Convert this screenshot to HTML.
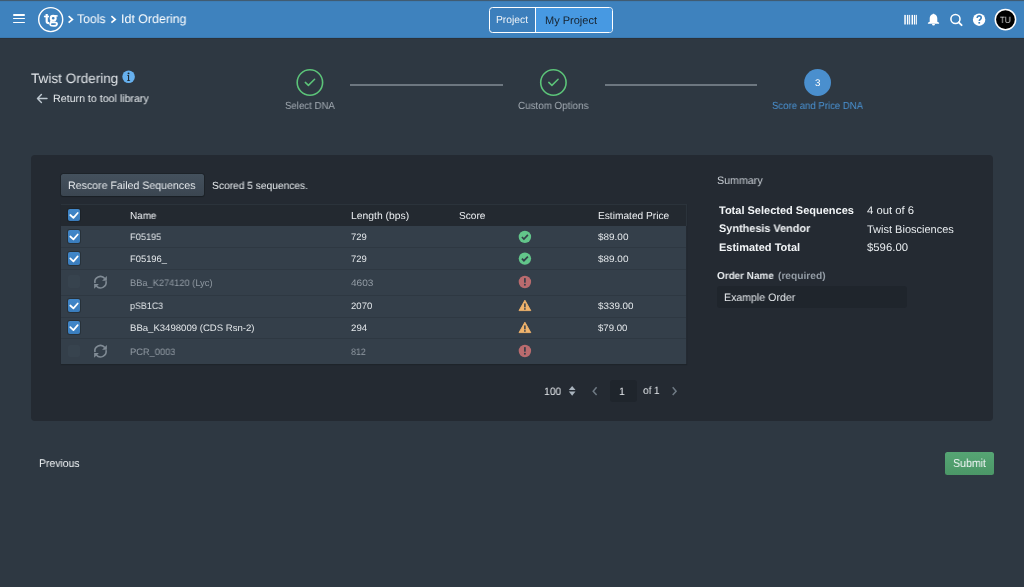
<!DOCTYPE html>
<html><head><meta charset="utf-8">
<style>
*{box-sizing:border-box;margin:0;padding:0}
html,body{width:1024px;height:587px;overflow:hidden;background:#2e3842;font-family:"Liberation Sans",sans-serif;color:#f5f8fa;text-rendering:geometricPrecision}
.a{position:absolute;white-space:pre;line-height:1;transform-origin:0 0;will-change:transform}
.b{position:absolute}
svg{position:absolute;display:block;overflow:visible}
.row{position:absolute;left:61px;width:625px;background:#343f4a;box-shadow:inset 0 1px 0 #2e3842}
.cb{position:absolute;left:68px;width:12.3px;height:12.5px;border-radius:2px;background:linear-gradient(#4187c9,#3a7dbd);box-shadow:0 0 0 1px rgba(16,22,26,.35)}
.cbd{position:absolute;left:68px;width:12.3px;height:12.5px;border-radius:2px;background:#37434e}
</style></head><body>
<!-- navbar -->
<div class="b" style="left:0;top:0;width:1024px;height:38px;background:#3e82be"></div>
<div class="b" style="left:0;top:0;width:1024px;height:1px;background:#405b72"></div>
<div class="b" style="left:0;top:1px;width:1024px;height:1px;background:#3d7db5"></div>
<div class="b" style="left:0;top:37px;width:1024px;height:1px;background:#3a7ab2"></div>
<div class="b" style="left:0;top:38px;width:1024px;height:1px;background:#2a323b"></div>
<!-- hamburger -->
<div class="b" style="left:12.9px;top:14.1px;width:12.3px;height:1.65px;background:#fff;border-radius:1px"></div>
<div class="b" style="left:12.9px;top:17.75px;width:12.3px;height:1.7px;background:#fff;border-radius:1px"></div>
<div class="b" style="left:12.9px;top:21.5px;width:12.3px;height:1.7px;background:#fff;border-radius:1px"></div>
<!-- logo -->
<svg style="left:0;top:0" width="1" height="1"><circle cx="50.7" cy="19.6" r="12" fill="none" stroke="#fff" stroke-width="1.4"/></svg>
<svg style="left:0;top:0" width="1" height="1"><g fill="none" stroke="#fff">
<path d="M46.7 13.9V21.5Q46.7 23.3 49.3 23.1" stroke-width="2.2"/>
<path d="M43.9 16.5H49" stroke-width="1.6"/>
<ellipse cx="53.2" cy="18.25" rx="2.45" ry="2.35" stroke-width="2.1"/>
<path d="M54.8 15.9H57.6" stroke-width="1.6"/>
<path d="M51.6 20.6Q50.3 21.6 51.3 22.3H54.6Q57.2 22.5 57.1 24.1Q56.9 25.9 53.6 25.9Q50.2 25.9 50.1 24.2Q50.1 23.2 51.3 22.6" stroke-width="1.7"/>
</g></svg>
<!-- breadcrumb chevrons -->
<svg style="left:0;top:0" width="1" height="1"><path d="M68.6 16.2 L72.4 19.4 L68.6 22.6" fill="none" stroke="#fff" stroke-width="1.7"/><path d="M111.4 16.2 L115.2 19.4 L111.4 22.6" fill="none" stroke="#fff" stroke-width="1.7"/></svg>
<!-- project switch -->
<div class="b" style="left:489px;top:7px;width:123.6px;height:25.5px;border:1.6px solid #fff;border-radius:3.5px;overflow:hidden;background:#3c7fbc">
  <div class="b" style="left:44.5px;top:0;width:1.6px;height:100%;background:#fff"></div>
  <div class="b" style="left:46px;top:0;right:0;height:100%;background:#4799e2"></div>
</div>
<!-- right icons -->
<svg style="left:0;top:0" width="1" height="1"><g fill="#fff">
<rect x="904.3" y="14.9" width="1.5" height="9.6"/><rect x="906.9" y="14.9" width="1.3" height="9.6"/><rect x="908.8" y="14.9" width="1.3" height="9.6" fill-opacity=".85"/><rect x="910.9" y="14.9" width="0.7" height="9.6" fill-opacity=".5"/><rect x="911.8" y="14.9" width="1.3" height="9.6"/><rect x="914" y="14.9" width="1.3" height="9.6"/><rect x="916" y="14.9" width="1" height="9.6" fill-opacity=".85"/>
</g>
<path fill="#fff" d="M933.5 13.6c-0.5 0-0.8 0.4-0.9 0.7c-1.8 0.5-2.9 2.1-2.9 4.1v3.4l-1.8 1.0v0.9h11.2v-0.9l-1.8-1.0v-3.4c0-2-1.1-3.6-2.9-4.1c-0.1-0.3-0.4-0.7-0.9-0.7z"/>
<path fill="#fff" d="M932 23.9h3a1.5 1.6 0 0 1-3 0z"/>
<circle cx="955.45" cy="19.05" r="4.55" fill="none" stroke="#fff" stroke-width="1.55"/>
<path d="M958.7 22.3 L961.6 25.2" stroke="#fff" stroke-width="1.9" stroke-linecap="round"/>
<circle cx="979.1" cy="19.7" r="6.2" fill="#fff"/>
<path d="M977.2 18.1c0-1.5 0.9-2.2 2-2.2c1.2 0 2 0.8 2 1.8c0 1.6-1.9 1.7-1.9 3.3" fill="none" stroke="#3e82be" stroke-width="1.6"/>
<rect x="978.4" y="22" width="1.7" height="1.6" fill="#3e82be"/>
<circle cx="1005.45" cy="19.55" r="10.15" fill="#000" stroke="#fff" stroke-width="1.5"/>
</svg>

<!-- title icons -->
<svg style="left:0;top:0" width="1" height="1">
<circle cx="128.6" cy="76.8" r="6.3" fill="#66b0ee"/>
<circle cx="128.55" cy="73.4" r="0.95" fill="#1f2a33"/>
<path d="M127.2 75h1.9v5.3h1v0.8h-3v-0.8h0.9v-4.5h-0.8z" fill="#1f2a33"/>
<path d="M47 98.5H37.6M41.4 94.6L37.5 98.5l3.9 3.9" fill="none" stroke="#bdc7d0" stroke-width="1.45" stroke-linecap="round" stroke-linejoin="round"/>
</svg>

<!-- steps -->
<svg style="left:0;top:0" width="1" height="1">
<circle cx="309.9" cy="82.5" r="12.7" fill="none" stroke="#5cc479" stroke-width="1.6"/>
<path d="M305.3 82.4 L308.4 85.4 L314.6 79.3" fill="none" stroke="#5cc479" stroke-width="1.5" stroke-linecap="round" stroke-linejoin="round"/>
<circle cx="553.4" cy="82.5" r="12.7" fill="none" stroke="#5cc479" stroke-width="1.6"/>
<path d="M548.8 82.4 L551.9 85.4 L558.1 79.3" fill="none" stroke="#5cc479" stroke-width="1.5" stroke-linecap="round" stroke-linejoin="round"/>
<circle cx="817.6" cy="82.5" r="13.4" fill="#4a8fce"/>
</svg>
<div class="b" style="left:350.4px;top:84px;width:152.2px;height:1.8px;background:#6d7780"></div>
<div class="b" style="left:604.6px;top:84px;width:152.1px;height:1.8px;background:#6d7780"></div>

<!-- panel -->
<div class="b" style="left:30.5px;top:154.5px;width:962.7px;height:266.5px;background:#242a32;border-radius:4px"></div>
<div class="b" style="left:60.9px;top:173.8px;width:143.1px;height:22.6px;background:linear-gradient(#44515d,#3b4651);border-radius:2.5px;box-shadow:0 0 0 1px rgba(16,22,26,.35),0 1px 1px rgba(16,22,26,.3)"></div>

<!-- table -->
<div class="b" style="left:61px;top:204px;width:625.5px;height:160px;box-shadow:0 1px 1px rgba(16,22,26,.3)"></div>
<div class="b" style="left:61px;top:204px;width:625.5px;height:22px;background:#232930;border-top:1px solid #2b333b;border-right:1px solid #2b333b"></div>
<div class="row" style="top:226px;height:21px;box-shadow:none"></div>
<div class="row" style="top:247px;height:22px"></div>
<div class="row" style="top:269px;height:26px"></div>
<div class="row" style="top:295px;height:22px"></div>
<div class="row" style="top:317px;height:21px"></div>
<div class="row" style="top:338px;height:26px"></div>

<div class="cb" style="top:208.8px"></div>
<div class="cb" style="top:230.3px"></div>
<div class="cb" style="top:252.2px"></div>
<div class="cbd" style="top:275.4px"></div>
<div class="cb" style="top:299.3px"></div>
<div class="cb" style="top:321px"></div>
<div class="cbd" style="top:344.6px"></div>
<svg style="left:0;top:0" width="1" height="1"><g fill="none" stroke="#fff" stroke-width="1.75" stroke-linecap="round" stroke-linejoin="round">
<path d="M70.3 215.0l3.1 2.9 4.3-4.9"/>
<path d="M70.3 236.5l3.1 2.9 4.3-4.9"/>
<path d="M70.3 258.4l3.1 2.9 4.3-4.9"/>
<path d="M70.3 305.5l3.1 2.9 4.3-4.9"/>
<path d="M70.3 327.2l3.1 2.9 4.3-4.9"/>
</g>
<!-- refresh -->
<g id="rf1" transform="translate(94,275.8)">
<g fill="none" stroke="#808b95" stroke-width="1.6"><path d="M0.95 7.4A5.6 5.6 0 0 1 10.8 2.8"/><path d="M12.05 5.4A5.6 5.6 0 0 1 2.2 10"/></g>
<path d="M12.9 0.1v4.8H8.1z" fill="#808b95"/><path d="M0.1 8.1h4.8L0.1 12.9z" fill="#808b95"/>
</g>
<g transform="translate(94,344.8)">
<g fill="none" stroke="#808b95" stroke-width="1.6"><path d="M0.95 7.4A5.6 5.6 0 0 1 10.8 2.8"/><path d="M12.05 5.4A5.6 5.6 0 0 1 2.2 10"/></g>
<path d="M12.9 0.1v4.8H8.1z" fill="#808b95"/><path d="M0.1 8.1h4.8L0.1 12.9z" fill="#808b95"/>
</g>
<!-- score icons -->
<g transform="translate(524.9,236.9)"><circle r="6.2" fill="#62c58a"/><path d="M-3 0.1l2 2 4-4.1" fill="none" stroke="#343f4a" stroke-width="1.7"/></g>
<g transform="translate(524.9,258.6)"><circle r="6.2" fill="#62c58a"/><path d="M-3 0.1l2 2 4-4.1" fill="none" stroke="#343f4a" stroke-width="1.7"/></g>
<g transform="translate(524.9,282)"><circle r="6.2" fill="#b96b6e"/><rect x="-0.85" y="-3.9" width="1.7" height="4.6" fill="#343f4a"/><circle cy="2.8" r="1" fill="#343f4a"/></g>
<g transform="translate(524.9,351)"><circle r="6.2" fill="#b96b6e"/><rect x="-0.85" y="-3.9" width="1.7" height="4.6" fill="#343f4a"/><circle cy="2.8" r="1" fill="#343f4a"/></g>
<g transform="translate(524.9,299.8)"><path d="M0 0.4L5.9 10.8H-5.9z" fill="#f0b36b" stroke="#f0b36b" stroke-width="0.9" stroke-linejoin="round"/><rect x="-0.75" y="3.6" width="1.5" height="4" fill="#343f4a"/><circle cy="9.1" r="0.85" fill="#343f4a"/></g>
<g transform="translate(524.9,321.8)"><path d="M0 0.4L5.9 10.8H-5.9z" fill="#f0b36b" stroke="#f0b36b" stroke-width="0.9" stroke-linejoin="round"/><rect x="-0.75" y="3.6" width="1.5" height="4" fill="#343f4a"/><circle cy="9.1" r="0.85" fill="#343f4a"/></g>
<!-- pagination -->
<path d="M572.15 386L575.5 390.1H568.8z" fill="#a9b3bd"/><path d="M572.15 395.7L575.5 391.6H568.8z" fill="#a9b3bd"/>
<path d="M596.6 387.3L593.2 391.2l3.4 3.9" fill="none" stroke="#6f7a84" stroke-width="1.5"/>
<path d="M672.7 387.3L676.1 391.2l-3.4 3.9" fill="none" stroke="#6f7a84" stroke-width="1.5"/>
</svg>
<div class="b" style="left:610px;top:379.9px;width:26.9px;height:22.2px;background:#1f252c;border-radius:3px"></div>

<!-- summary input -->
<div class="b" style="left:717.2px;top:286px;width:190.1px;height:22.4px;background:#1f252c;border-radius:3px"></div>

<!-- footer -->
<div class="b" style="left:945px;top:451.8px;width:48.6px;height:23.4px;background:linear-gradient(#56a574,#4b9767);border-radius:2.5px"></div>

<div class="a" style="left:77.30px;top:13.03px;font-size:12.5px;color:#ffffff;transform:scaleX(0.976);">Tools</div>
<div class="a" style="left:120.50px;top:13.03px;font-size:12.5px;color:#ffffff;transform:scaleX(0.992);">Idt Ordering</div>
<div class="a" style="left:496.00px;top:15.84px;font-size:10.3px;color:#eef3f8;">Project</div>
<div class="a" style="left:545.00px;top:15.70px;font-size:11px;color:#16212c;">My Project</div>
<div class="a" style="left:1000.40px;top:16.17px;font-size:9px;color:#d9d9d9;transform:scaleX(0.883);">TU</div>
<div class="a" style="left:31.00px;top:71.70px;font-size:13.7px;color:#e3e7eb;transform:scaleX(0.990);">Twist Ordering</div>
<div class="a" style="left:53.30px;top:94.21px;font-size:10.7px;color:#e8ecef;transform:scaleX(0.994);">Return to tool library</div>
<div class="a" style="left:284.60px;top:102.14px;font-size:10.3px;color:#a2aab2;transform:scaleX(0.937);">Select DNA</div>
<div class="a" style="left:518.40px;top:102.14px;font-size:10.3px;color:#a2aab2;transform:scaleX(0.953);">Custom Options</div>
<div class="a" style="left:772.00px;top:102.14px;font-size:10.3px;color:#4a93d4;transform:scaleX(0.931);">Score and Price DNA</div>
<div class="a" style="left:814.90px;top:79.24px;font-size:9.8px;color:#ffffff;transform:scaleX(0.972);">3</div>
<div class="a" style="left:68.30px;top:181.20px;font-size:10.8px;color:#e8ecef;transform:scaleX(0.983);">Rescore Failed Sequences</div>
<div class="a" style="left:212.20px;top:182.24px;font-size:10.4px;color:#e8ecef;transform:scaleX(0.983);">Scored 5 sequences.</div>
<div class="a" style="left:129.70px;top:212.24px;font-size:10.1px;color:#eceff2;transform:scaleX(0.980);">Name</div>
<div class="a" style="left:350.60px;top:212.24px;font-size:10.1px;color:#eceff2;transform:scaleX(1.025);">Length (bps)</div>
<div class="a" style="left:458.75px;top:212.24px;font-size:10.1px;color:#eceff2;transform:scaleX(0.994);">Score</div>
<div class="a" style="left:597.60px;top:212.24px;font-size:10.1px;color:#eceff2;transform:scaleX(1.008);">Estimated Price</div>
<div class="a" style="left:129.80px;top:232.47px;font-size:9.4px;color:#e4e8eb;transform:scaleX(0.984);">F05195</div>
<div class="a" style="left:350.70px;top:232.47px;font-size:9.4px;color:#e4e8eb;transform:scaleX(1.006);">729</div>
<div class="a" style="left:597.80px;top:232.47px;font-size:9.4px;color:#e4e8eb;transform:scaleX(1.061);">$89.00</div>
<div class="a" style="left:129.80px;top:254.17px;font-size:9.4px;color:#e4e8eb;transform:scaleX(0.991);">F05196_</div>
<div class="a" style="left:350.70px;top:254.17px;font-size:9.4px;color:#e4e8eb;transform:scaleX(1.006);">729</div>
<div class="a" style="left:597.80px;top:254.17px;font-size:9.4px;color:#e4e8eb;transform:scaleX(1.061);">$89.00</div>
<div class="a" style="left:129.80px;top:277.88px;font-size:9.4px;color:#949da6;transform:scaleX(0.987);">BBa_K274120 (Lyc)</div>
<div class="a" style="left:350.70px;top:277.88px;font-size:9.4px;color:#949da6;transform:scaleX(1.077);">4603</div>
<div class="a" style="left:129.80px;top:301.27px;font-size:9.4px;color:#e4e8eb;transform:scaleX(0.949);">pSB1C3</div>
<div class="a" style="left:350.70px;top:301.27px;font-size:9.4px;color:#e4e8eb;transform:scaleX(1.019);">2070</div>
<div class="a" style="left:597.80px;top:301.27px;font-size:9.4px;color:#e4e8eb;transform:scaleX(1.047);">$339.00</div>
<div class="a" style="left:129.80px;top:323.38px;font-size:9.4px;color:#e4e8eb;transform:scaleX(1.021);">BBa_K3498009 (CDS Rsn-2)</div>
<div class="a" style="left:350.70px;top:323.38px;font-size:9.4px;color:#e4e8eb;transform:scaleX(1.032);">294</div>
<div class="a" style="left:597.80px;top:323.38px;font-size:9.4px;color:#e4e8eb;transform:scaleX(1.023);">$79.00</div>
<div class="a" style="left:129.80px;top:346.88px;font-size:9.4px;color:#949da6;transform:scaleX(0.989);">PCR_0003</div>
<div class="a" style="left:350.70px;top:346.88px;font-size:9.4px;color:#949da6;transform:scaleX(0.943);">812</div>
<div class="a" style="left:543.90px;top:387.12px;font-size:10.6px;color:#e3e7eb;transform:scaleX(0.972);">100</div>
<div class="a" style="left:618.60px;top:387.22px;font-size:10.6px;color:#e3e7eb;">1</div>
<div class="a" style="left:642.70px;top:386.22px;font-size:10.6px;color:#e3e7eb;transform:scaleX(0.938);">of 1</div>
<div class="a" style="left:716.80px;top:176.20px;font-size:10.9px;color:#c9cfd5;transform:scaleX(0.980);">Summary</div>
<div class="a" style="left:718.90px;top:206.12px;font-size:11px;color:#f2f5f7;font-weight:700;">Total Selected Sequences</div>
<div class="a" style="left:718.60px;top:224.22px;font-size:11px;color:#f2f5f7;font-weight:700;transform:scaleX(0.990);">Synthesis Vendor</div>
<div class="a" style="left:718.60px;top:242.52px;font-size:11px;color:#f2f5f7;font-weight:700;">Estimated Total</div>
<div class="a" style="left:867.00px;top:206.20px;font-size:11px;color:#e8ecef;transform:scaleX(1.027);">4 out of 6</div>
<div class="a" style="left:867.30px;top:224.50px;font-size:11px;color:#e8ecef;">Twist Biosciences</div>
<div class="a" style="left:867.00px;top:242.50px;font-size:11px;color:#e8ecef;transform:scaleX(1.031);">$596.00</div>
<div class="a" style="left:717.20px;top:272.05px;font-size:10.2px;color:#e8ecef;font-weight:700;transform:scaleX(0.973);">Order Name</div>
<div class="a" style="left:778.10px;top:272.05px;font-size:10.2px;color:#939ca5;font-weight:700;transform:scaleX(0.992);">(required)</div>
<div class="a" style="left:724.40px;top:293.20px;font-size:10.8px;color:#e8ecef;transform:scaleX(0.981);">Example Order</div>
<div class="a" style="left:38.60px;top:459.09px;font-size:11.2px;color:#f2f5f7;transform:scaleX(0.931);">Previous</div>
<div class="a" style="left:952.90px;top:458.27px;font-size:11.6px;color:#f5f8fa;transform:scaleX(0.914);">Submit</div>
</body></html>
